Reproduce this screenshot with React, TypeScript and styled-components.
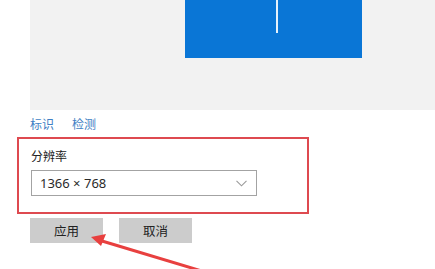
import React from "react";
import styled, { createGlobalStyle } from "styled-components";

const Global = createGlobalStyle`
  html, body { margin: 0; padding: 0; background: #ffffff; overflow: hidden; }
  body { font-family: "Noto Sans CJK SC", "Noto Sans", sans-serif; }
`;

const Page = styled.div`
  position: relative;
  width: 435px;
  height: 269px;
  overflow: hidden;
  background: #fff;
`;

const Canvas = styled.div`
  margin-left: 30px;
  height: 110px;
  background: #f2f2f2;
  display: flex;
  align-items: flex-start;
  padding-left: 155px;
`;

const Display = styled.div`
  width: 177px;
  height: 58px;
  background: #0a76d6;
  display: flex;
  align-items: flex-start;
  padding-left: 91px;
  box-sizing: border-box;
`;

const Digit = styled.div`
  width: 2px;
  height: 33px;
  background: #e6f2fb;
`;

const Links = styled.div`
  display: flex;
  gap: 18px;
  margin: 3px 0 2px 30px;
  height: 22px;
  align-items: center;
`;

const Link = styled.span`
  font-size: 12px;
  color: #3f7fc4;
  line-height: 1;
`;

const Frame = styled.section`
  margin: 0 0 0 17px;
  width: 292px;
  height: 77px;
  box-sizing: border-box;
  border: 2px solid #de4a50;
  padding: 8px 0 0 12px;
  display: flex;
  flex-direction: column;
  gap: 6px;
`;

const Label = styled.div`
  font-size: 12px;
  color: #222;
  line-height: 17px;
`;

const Select = styled.div`
  width: 226px;
  height: 26px;
  box-sizing: border-box;
  border: 1px solid #a3a3a3;
  display: flex;
  align-items: center;
  justify-content: space-between;
  padding: 0 9px 0 8px;
  font-family: "Noto Sans", "Noto Sans CJK SC", sans-serif;
  font-size: 13px;
  color: #2a2a2a;
`;

const Buttons = styled.div`
  display: flex;
  gap: 16px;
  margin: 4px 0 0 30px;
`;

const Button = styled.div`
  width: 73px;
  height: 25px;
  background: #cccccc;
  display: flex;
  align-items: center;
  justify-content: center;
  font-size: 12.5px;
  color: #222;
`;

const Arrow = styled.svg`
  position: absolute;
  left: 0;
  top: 0;
  pointer-events: none;
`;

export default function App() {
  return (
    <Page>
      <Global />
      <Canvas>
        <Display>
          <Digit />
        </Display>
      </Canvas>
      <Links>
        <Link>标识</Link>
        <Link>检测</Link>
      </Links>
      <Frame>
        <Label>分辨率</Label>
        <Select>
          <span>1366 × 768</span>
          <svg width="11" height="7" viewBox="0 0 11 7">
            <path d="M0.5 0.8 L5.5 5.8 L10.5 0.8" fill="none" stroke="#9a9a9a" strokeWidth="1.1" />
          </svg>
        </Select>
      </Frame>
      <Buttons>
        <Button>应用</Button>
        <Button>取消</Button>
      </Buttons>
      <Arrow width="435" height="269" viewBox="0 0 435 269">
        <line x1="102" y1="241" x2="215" y2="275" stroke="#e8403f" strokeWidth="3" />
        <polygon points="91,237 106,234 101,246" fill="#e8403f" />
      </Arrow>
    </Page>
  );
}
